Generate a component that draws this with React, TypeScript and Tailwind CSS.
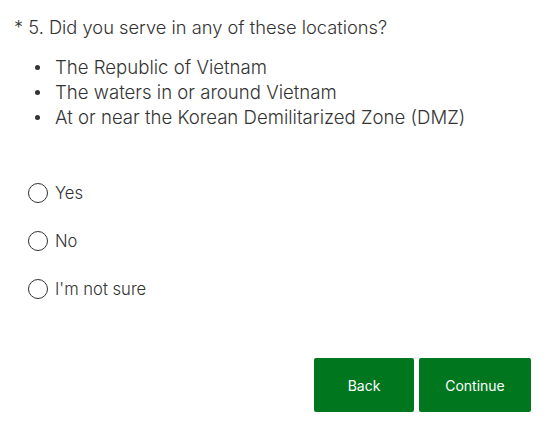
import React from "react";

const items = [
  "The Republic of Vietnam",
  "The waters in or around Vietnam",
  "At or near the Korean Demilitarized Zone (DMZ)",
];

const options = ["Yes", "No", "I'm not sure"];

export default function App() {
  return (
    <div
      className="w-[546px] h-[423px] bg-white flex flex-col"
      style={{ fontFamily: "Inter, Roboto, 'Liberation Sans', sans-serif" }}
    >
      <div className="pl-[14px] pt-[15px] text-[18.3px] leading-[24px] font-light text-[#333]">
        * 5. Did you serve in any of these locations?
      </div>
      <ul className="mt-[16px] flex flex-col">
        {items.map((t) => (
          <li key={t} className="flex items-center h-[25px] text-[18.6px] leading-[25px] font-light text-[#333]">
            <span className="w-[35px]" />
            <span className="w-[5px] h-[5px] rounded-full bg-[#333]" />
            <span className="ml-[15px]">{t}</span>
          </li>
        ))}
      </ul>
      <div className="mt-[39px] flex flex-col">
        {options.map((o) => (
          <label key={o} className="flex items-center h-[48px] pl-[28px] cursor-pointer">
            <span className="w-[20px] h-[20px] rounded-full border border-[#333] bg-white" />
            <span className="ml-[7px] text-[16.6px] font-light text-[#333]">{o}</span>
          </label>
        ))}
      </div>
      <div className="mt-[45px] flex justify-end gap-[5px] pr-[15px]">
        <button className="w-[100px] h-[54px] rounded-[2px] bg-[#00771f] text-white text-[14px]">
          Back
        </button>
        <button className="w-[112px] h-[54px] rounded-[2px] bg-[#00771f] text-white text-[14px]">
          Continue
        </button>
      </div>
    </div>
  );
}
